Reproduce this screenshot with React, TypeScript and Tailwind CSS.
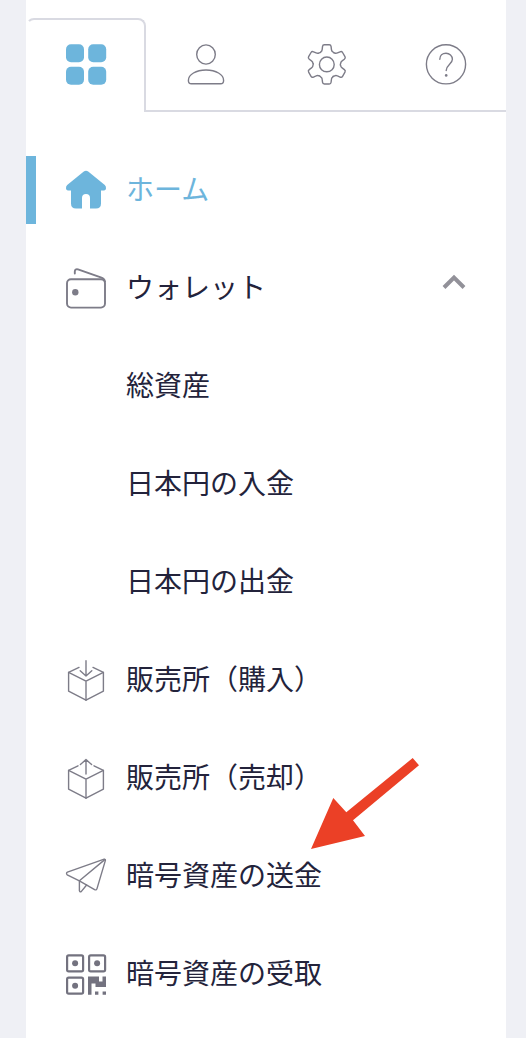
import type { ReactNode } from "react";

const line = {
  fill: "none",
  stroke: "#7d7c88",
  strokeWidth: 1.4,
  strokeLinecap: "round",
  strokeLinejoin: "round",
} as const;

function Icon({ children }: { children: ReactNode }) {
  return (
    <svg viewBox="0 0 40 40" className="size-10 shrink-0 overflow-visible" aria-hidden="true">
      {children}
    </svg>
  );
}

function gearPath(): string {
  const parts: string[] = [];
  for (let i = 0; i < 6; i++) {
    const at = (x: number, y: number, turn = i) => {
      const a = (turn * Math.PI) / 3;
      const px = 20.8 + x * Math.cos(a) - y * Math.sin(a);
      const py = 20.4 + x * Math.sin(a) + y * Math.cos(a);
      return `${px.toFixed(2)} ${py.toFixed(2)}`;
    };
    parts.push(
      `${i === 0 ? "M" : "L"}${at(-4.6, -15)} L${at(-4.3, -17.8)} Q${at(-4.1, -19.6)} ${at(-2.4, -19.6)}`,
      `L${at(2.4, -19.6)} Q${at(4.1, -19.6)} ${at(4.3, -17.8)} L${at(4.6, -15)}`,
      `Q${at(4.7, -13.2)} ${at(6.2, -12.4)} Q${at(7.6, -10.8)} ${at(-6.2, -12.4, i + 1)} Q${at(-4.7, -13.2, i + 1)} ${at(-4.6, -15, i + 1)}`,
    );
  }
  return parts.join(" ") + "Z";
}

const GridIcon = () => (
  <Icon>
    <g fill="#6db5dc">
      <rect x="0" y="0.2" width="18" height="18" rx="5" />
      <rect x="22.2" y="0.2" width="18" height="18" rx="5" />
      <rect x="0" y="22.8" width="18" height="18" rx="5" />
      <rect x="22.2" y="22.8" width="18" height="18" rx="5" />
    </g>
  </Icon>
);

const UserIcon = () => (
  <Icon>
    <g {...line}>
      <ellipse cx="20" cy="10.5" rx="9.3" ry="9.6" />
      <path d="M5.4 39.8H34.6Q37.6 39.8 37.6 36.4C37.6 30.5 30 26 20 26S2.4 30.5 2.4 36.4Q2.4 39.8 5.4 39.8Z" />
    </g>
  </Icon>
);

const GearIcon = () => (
  <Icon>
    <g {...line}>
      <path d={gearPath()} />
      <circle cx="20.8" cy="20.4" r="7.4" />
    </g>
  </Icon>
);

const HelpIcon = () => (
  <Icon>
    <circle cx="20" cy="20.3" r="19.6" {...line} />
    <path d="M13.8 15.2C13.8 11.6 16.5 9.2 20 9.2S26.4 11.8 26.4 15.2C26.4 20 20.2 20.5 20.2 26.6" {...line} />
    <circle cx="20.2" cy="31.4" r="1.3" fill="#7d7c88" />
  </Icon>
);

const HomeIcon = () => (
  <Icon>
    <path
      fill="#6db5dc"
      d="M17.8 1.4Q20 0 22.2 1.4L38.8 15Q40.2 16.3 40 18.6Q39.8 20.6 38 20.6H35V33.6Q35 38.6 30 38.6H24V28A4 4 0 0 0 16 28V38.6H10Q5 38.6 5 33.6V20.6H2Q.2 20.6 0 18.6Q-.2 16.3 1.2 15Z"
    />
  </Icon>
);

const WalletIcon = () => (
  <Icon>
    <g {...line} strokeWidth={1.9}>
      <rect x="1" y="11.2" width="38" height="28.4" rx="4" />
      <path d="M8.8 5.6V3.6Q9 .6 12 1.4L35.5 9.6Q38.4 10.6 39 13.6" />
    </g>
    <circle cx="9.3" cy="24.2" r="3.2" fill="#7d7c88" />
  </Icon>
);

const BuyIcon = () => (
  <Icon>
    <g {...line}>
      <path d="M13 7.4L2.6 12.4V31.2L20 40.2L37.4 31.2V12.4L27 7.4" />
      <path d="M2.6 12.4L20 21.2L37.4 12.4M20 21.2V40.2" />
      <path d="M20 .8V16M14.2 10.8L20 16L25.8 10.8" />
    </g>
  </Icon>
);

const SellIcon = () => (
  <Icon>
    <g {...line}>
      <path d="M12 7.8L2.6 12.4V31.2L20 40.2L37.4 31.2V12.4L28 7.8" />
      <path d="M2.6 12.4L20 21.2L37.4 12.4M20 21.2V40.2" />
      <path d="M20 16V1.4M14.4 6.6L20 1.4L25.6 6.6" />
    </g>
  </Icon>
);

const SendIcon = () => (
  <Icon>
    <g {...line}>
      <path d="M38.2 3.2L1.4 16.2Q-.2 17.2 1.2 18.8L13.4 24.8L28.6 33.7Q30.4 34.4 31 32.6L39.4 4.4Q39.6 3 38.2 3.2Z" />
      <path d="M38.8 3.6L13.4 24.8V34.6Q13.8 36.6 15.4 35.4L20.6 29" />
    </g>
  </Icon>
);

const QrIcon = () => (
  <Icon>
    <g fill="none" stroke="#73727f" strokeWidth="2.2">
      <rect x="1.1" y="1.3" width="16" height="16" rx="1.6" />
      <rect x="23.1" y="1.3" width="16" height="16" rx="1.6" />
      <rect x="1.1" y="23.7" width="16" height="16" rx="1.6" />
    </g>
    <g fill="#73727f">
      <circle cx="9.1" cy="9.3" r="3" />
      <circle cx="31.1" cy="9.3" r="3" />
      <circle cx="9.1" cy="31.7" r="3" />
      <path d="M22 22.6H33V27.6H36.5V22.6H40V33H29.5V29.5H25.5V40.8H22ZM29 37.5H32.4V40.8H29ZM36.6 37.5H40V40.8H36.6Z" />
    </g>
  </Icon>
);

const tabs = [
  { label: "アカウント", icon: <UserIcon /> },
  { label: "設定", icon: <GearIcon /> },
  { label: "ヘルプ", icon: <HelpIcon /> },
];

const row = "flex h-[68px] w-full items-center gap-5 pr-8 text-left";

function NavLink({ label, icon }: { label: string; icon?: ReactNode }) {
  return (
    <a href="#" className={`${row} pl-10`}>
      {icon ?? <span className="w-10 shrink-0" />}
      <span className="pb-1">{label}</span>
    </a>
  );
}

export default function App() {
  return (
    <div className="min-h-screen bg-[#eff0f5] pr-5 pl-[26px] font-['Noto_Sans_CJK_JP',sans-serif] text-[28px] leading-10 text-[#23233b]">
      <div className="min-h-screen bg-white pt-[18px] pb-[30px]">
        <div role="tablist" className="grid h-[94px] grid-cols-4">
          <button
            type="button"
            role="tab"
            aria-selected="true"
            aria-label="メニュー"
            className="flex items-center justify-center rounded-t-lg border-2 border-b-0 border-[#d9dae2] border-l-transparent pb-1"
          >
            <GridIcon />
          </button>
          {tabs.map((tab) => (
            <button
              key={tab.label}
              type="button"
              role="tab"
              aria-selected="false"
              aria-label={tab.label}
              className="flex items-center justify-center border-b-2 border-[#d9dae2]"
            >
              {tab.icon}
            </button>
          ))}
        </div>
        <nav className="pt-11">
          <ul className="flex flex-col gap-[30px]">
            <li>
              <a
                href="#"
                aria-current="page"
                className={`${row} border-l-10 border-[#6db5dc] pl-[30px] text-[#6db5dc]`}
              >
                <HomeIcon />
                <span className="pb-1">ホーム</span>
              </a>
            </li>
            <li>
              <button type="button" aria-expanded="true" className={`${row} pl-10`}>
                <WalletIcon />
                <span className="grow pb-1">ウォレット</span>
                <Icon>
                  <path d="M10 19.5L20 9.5L30 19.5" fill="none" stroke="#929199" strokeWidth="4" />
                </Icon>
              </button>
              <ul className="flex flex-col gap-[30px] pt-[30px]">
                <li><NavLink label="総資産" /></li>
                <li><NavLink label="日本円の入金" /></li>
                <li><NavLink label="日本円の出金" /></li>
              </ul>
            </li>
            <li><NavLink label="販売所（購入）" icon={<BuyIcon />} /></li>
            <li><NavLink label="販売所（売却）" icon={<SellIcon />} /></li>
            <li className="relative">
              <NavLink label="暗号資産の送金" icon={<SendIcon />} />
              <svg
                viewBox="0 0 108 91"
                className="pointer-events-none absolute bottom-[61px] left-[285px] h-[91px] w-[108px]"
                aria-hidden="true"
              >
                <path fill="#eb4026" d="M0 91L22.3 40L35.3 54.3L101.7 0L108 7.3L42 62.3L54 78Z" />
              </svg>
            </li>
            <li><NavLink label="暗号資産の受取" icon={<QrIcon />} /></li>
          </ul>
        </nav>
      </div>
    </div>
  );
}
